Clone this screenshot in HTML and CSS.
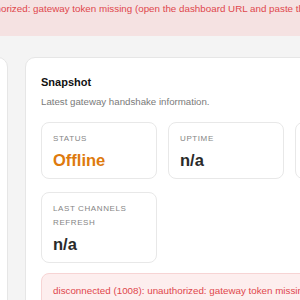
FILE: index.html
```html
<!DOCTYPE html>
<html lang="en">
<head>
    <meta charset="UTF-8">
    <meta name="viewport" content="width=device-width, initial-scale=1.0">
    <title>Gateway Overview</title>
    <link rel="stylesheet" href="styles.css">
</head>
<body>
    <div class="page">
        <div class="banner">unauthorized: gateway token missing (open the dashboard URL and paste the token in Control UI settings)</div>

        <div class="shell">
            <aside class="side-card"></aside>

            <section class="card">
                <h2 class="card-title">Snapshot</h2>
                <p class="card-sub">Latest gateway handshake information.</p>

                <div class="stats">
                    <div class="stat">
                        <div class="stat-label">Status</div>
                        <div class="stat-value offline">Offline</div>
                    </div>
                    <div class="stat">
                        <div class="stat-label">Uptime</div>
                        <div class="stat-value">n/a</div>
                    </div>
                    <div class="stat">
                        <div class="stat-label">Tick interval</div>
                        <div class="stat-value">n/a</div>
                    </div>
                    <div class="stat">
                        <div class="stat-label">Last channels refresh</div>
                        <div class="stat-value">n/a</div>
                    </div>
                </div>

                <div class="error-box">disconnected (1008): unauthorized: gateway token missing (open the dashboard URL and paste the token)</div>
            </section>
        </div>
    </div>
</body>
</html>
```

FILE: styles.css
```css
/* Reset */
* {
    margin: 0;
    padding: 0;
    box-sizing: border-box;
}

body {
    font-family: "Liberation Sans", Arial, sans-serif;
    background-color: #f4f4f4;
    color: #222;
    overflow: hidden;
}

/* page is wider than the window, left part scrolled out of view */
.page {
    margin-left: -200px;
    width: 720px;
}

.banner {
    height: 36px;
    padding: 2px 0 0 171px;
    background-color: #f5e2e2;
    color: #e0474c;
    font-size: 9.8px;
    line-height: 14px;
    white-space: nowrap;
}

.shell {
    display: flex;
    gap: 17px;
    padding-top: 21px;
}

.side-card {
    width: 208px;
    height: 260px;
    flex-shrink: 0;
    background-color: #fff;
    border: 1px solid #e6e6e6;
    border-radius: 10px;
}

.card {
    flex: 1;
    background-color: #fff;
    border: 1px solid #e6e6e6;
    border-radius: 10px;
    padding: 17px 15px;
}

.card-title {
    font-size: 11px;
    font-weight: 700;
    line-height: 14px;
    color: #111;
}

.card-sub {
    margin-top: 6px;
    font-size: 9.7px;
    line-height: 14px;
    color: #7a7a7a;
}

.stats {
    display: grid;
    grid-template-columns: repeat(4, 116px);
    column-gap: 11px;
    row-gap: 13px;
    margin-top: 13px;
    align-items: start;
}

.stat {
    border: 1px solid #e8e8e8;
    border-radius: 8px;
    padding: 9px 11px 8px;
}

.stat:nth-child(4) {
    grid-column: 1;
}

.stat-label {
    font-size: 8px;
    line-height: 14px;
    letter-spacing: 0.6px;
    text-transform: uppercase;
    color: #858585;
}

.stat-value {
    margin-top: 4px;
    font-size: 16.5px;
    font-weight: 700;
    line-height: 20px;
    color: #2a2a2a;
}

.stat-value.offline {
    color: #de7a0d;
}

.error-box {
    margin-top: 10px;
    padding: 10px 11px;
    background-color: #fdeeee;
    border: 1px solid #f7d4d4;
    border-radius: 8px;
    color: #e0474c;
    font-size: 9.8px;
    line-height: 14px;
    white-space: nowrap;
    overflow: hidden;
}
```
